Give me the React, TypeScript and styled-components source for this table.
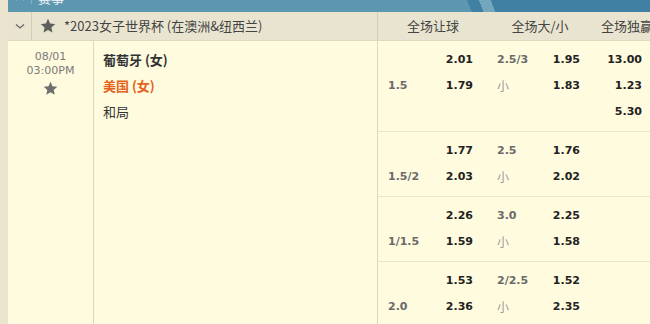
import React from 'react';
import styled, { createGlobalStyle } from 'styled-components';

const GlobalStyle = createGlobalStyle`
  html, body {
    margin: 0;
    padding: 0;
    background: #ebe5d0;
  }
  * {
    box-sizing: border-box;
  }
`;

const CJK = `"Noto Sans CJK SC", "Noto Sans", sans-serif`;
const NUM = `"DejaVu Sans", "Noto Sans CJK SC", sans-serif`;

const Page = styled.div`
  width: 650px;
  height: 324px;
  overflow: hidden;
  background: #ebe5d0;
  padding-left: 8px;
`;

const Panel = styled.div`
  width: 642px;
  height: 100%;
  display: flex;
  flex-direction: column;
  background: #fffbdf;
`;

// 상단 파란 바
const TopBar = styled.div`
  height: 12px;
  flex-shrink: 0;
  display: flex;
  align-items: flex-start;
  overflow: hidden;
  background: linear-gradient(
    68deg,
    #5d96af 0 430px,
    #3f80a3 430px 441px,
    #72a7bd 441px 452px,
    #3f80a3 452px
  );
`;

const TopToggle = styled.div`
  width: 24px;
  height: 100%;
  border-right: 1px solid #7fb0c6;
  display: flex;
  justify-content: center;
  align-items: flex-end;
  margin-top: -8px;
  color: #e8f2f7;
`;

const TopTitle = styled.span`
  margin-top: -9px;
  padding-left: 6px;
  font: 13px/13px ${CJK};
  color: #f2f7fa;
`;

// 리그 헤더
const LeagueRow = styled.div`
  height: 29px;
  flex-shrink: 0;
  display: flex;
  background: #e9e4d0;
  border-bottom: 1px solid #e0d9c0;
`;

const LeagueInfo = styled.div`
  width: 369px;
  flex-shrink: 0;
  display: flex;
  align-items: center;
`;

const Toggle = styled.div`
  width: 24px;
  height: 100%;
  border-right: 1px solid #d3ccb4;
  display: flex;
  align-items: center;
  justify-content: center;
  color: #666;
`;

const LeagueStar = styled.div`
  width: 32px;
  display: flex;
  justify-content: center;
  color: #5f5f5f;
`;

const LeagueName = styled.span`
  font: 13px/28px ${CJK};
  color: #444;
  white-space: nowrap;
`;

const MarketHead = styled.div`
  flex: 1;
  min-width: 0;
  overflow: hidden;
  display: grid;
  grid-template-columns: 110px 104px 80px;
  border-left: 1px solid #d6cfb7;
  white-space: nowrap;
`;

const MarketLabel = styled.div<{ $align?: string }>`
  font: 13px/28px ${CJK};
  color: #444;
  text-align: ${(p) => p.$align || 'center'};
  padding-left: ${(p) => (p.$align === 'left' ? '9px' : '0')};
`;

// 경기 본문
const MatchBody = styled.div`
  flex: 1;
  display: grid;
  grid-template-columns: 86px 284px 1fr;
  overflow: hidden;
`;

const DateCell = styled.div`
  border-right: 1px solid #dcd7bf;
  display: flex;
  flex-direction: column;
  align-items: center;
  padding-top: 9px;
`;

const DateText = styled.span`
  font: 11px/14px ${NUM};
  color: #7a7a7a;
`;

const FavStar = styled.div`
  margin-top: 3px;
  color: #6f6f6f;
  display: flex;
`;

const TeamCell = styled.div`
  border-right: 1px solid #dcd7bf;
  padding: 6px 0 0 9px;
`;

const TeamLine = styled.div<{ $tone?: 'home' | 'away' | 'draw' }>`
  font: ${(p) => (p.$tone === 'draw' ? 400 : 700)} 13px/26px ${CJK};
  color: ${(p) => (p.$tone === 'away' ? '#e4621b' : '#333')};
`;

const OddsStack = styled.div`
  display: flex;
  flex-direction: column;
`;

const OddsRow = styled.div`
  display: grid;
  grid-template-columns: 62px 33px 63px 44px 62px;
  grid-auto-rows: 26px;
  padding: 6px 0;
  border-bottom: 1px solid #ebe5cc;
`;

type CellKind = 'line' | 'odds' | 'side' | 'empty';

const Cell = styled.div<{ $kind: CellKind; $pad?: number }>`
  font-family: ${(p) => (p.$kind === 'side' ? CJK : NUM)};
  font-size: ${(p) => (p.$kind === 'side' ? '12px' : '11px')};
  font-weight: ${(p) => (p.$kind === 'side' ? 400 : 700)};
  line-height: 26px;
  white-space: nowrap;
  color: ${(p) =>
    p.$kind === 'odds' ? '#222' : p.$kind === 'line' ? '#6a6a6a' : '#9a9a9a'};
  text-align: ${(p) => (p.$kind === 'odds' ? 'right' : 'left')};
  padding-left: ${(p) => (p.$pad ? `${p.$pad}px` : '0')};
`;

const Star = ({ size }: { size: number }) => (
  <svg width={size} height={size} viewBox="0 0 16 16">
    <path
      d="M8 0.8l2.15 4.75 5.1.5-3.85 3.45 1.1 5.05L8 11.95 3.5 14.55l1.1-5.05L.75 6.05l5.1-.5z"
      fill="currentColor"
    />
  </svg>
);

const Chevron = ({ up }: { up?: boolean }) => (
  <svg width="12" height="12" viewBox="0 0 12 12">
    <path
      d={up ? 'M2 8l4-4 4 4' : 'M2 4.5l4 3.5 4-3.5'}
      fill="none"
      stroke="currentColor"
      strokeWidth="1.3"
    />
  </svg>
);

interface Market {
  hdp: string;
  hdpHome: string;
  hdpAway: string;
  ou: string;
  over: string;
  under: string;
  x12?: string[];
}

const markets: Market[] = [
  { hdp: '1.5', hdpHome: '2.01', hdpAway: '1.79', ou: '2.5/3', over: '1.95', under: '1.83', x12: ['13.00', '1.23', '5.30'] },
  { hdp: '1.5/2', hdpHome: '1.77', hdpAway: '2.03', ou: '2.5', over: '1.76', under: '2.02' },
  { hdp: '1/1.5', hdpHome: '2.26', hdpAway: '1.59', ou: '3.0', over: '2.25', under: '1.58' },
  { hdp: '2.0', hdpHome: '1.53', hdpAway: '2.36', ou: '2/2.5', over: '1.52', under: '2.35' },
];

const OddsBlock = ({ m }: { m: Market }) => (
  <OddsRow>
    <Cell $kind="empty" />
    <Cell $kind="odds">{m.hdpHome}</Cell>
    <Cell $kind="line" $pad={24}>{m.ou}</Cell>
    <Cell $kind="odds">{m.over}</Cell>
    <Cell $kind="odds">{m.x12 ? m.x12[0] : ''}</Cell>

    <Cell $kind="line" $pad={10}>{m.hdp}</Cell>
    <Cell $kind="odds">{m.hdpAway}</Cell>
    <Cell $kind="side" $pad={24}>小</Cell>
    <Cell $kind="odds">{m.under}</Cell>
    <Cell $kind="odds">{m.x12 ? m.x12[1] : ''}</Cell>

    {m.x12 && (
      <>
        <Cell $kind="empty" />
        <Cell $kind="empty" />
        <Cell $kind="empty" />
        <Cell $kind="empty" />
        <Cell $kind="odds">{m.x12[2]}</Cell>
      </>
    )}
  </OddsRow>
);

const App: React.FC = () => {
  return (
    <Page>
      <GlobalStyle />
      <Panel>
        <TopBar>
          <TopToggle>
            <Chevron up />
          </TopToggle>
          <TopTitle>赛事</TopTitle>
        </TopBar>

        <LeagueRow>
          <LeagueInfo>
            <Toggle>
              <Chevron />
            </Toggle>
            <LeagueStar>
              <Star size={16} />
            </LeagueStar>
            <LeagueName>*2023女子世界杯 (在澳洲&amp;纽西兰)</LeagueName>
          </LeagueInfo>
          <MarketHead>
            <MarketLabel>全场让球</MarketLabel>
            <MarketLabel>全场大/小</MarketLabel>
            <MarketLabel $align="left">全场独赢</MarketLabel>
          </MarketHead>
        </LeagueRow>

        <MatchBody>
          <DateCell>
            <DateText>08/01</DateText>
            <DateText>03:00PM</DateText>
            <FavStar>
              <Star size={15} />
            </FavStar>
          </DateCell>
          <TeamCell>
            <TeamLine $tone="home">葡萄牙 (女)</TeamLine>
            <TeamLine $tone="away">美国 (女)</TeamLine>
            <TeamLine $tone="draw">和局</TeamLine>
          </TeamCell>
          <OddsStack>
            {markets.map((m) => (
              <OddsBlock key={m.hdp} m={m} />
            ))}
          </OddsStack>
        </MatchBody>
      </Panel>
    </Page>
  );
};

export default App;
